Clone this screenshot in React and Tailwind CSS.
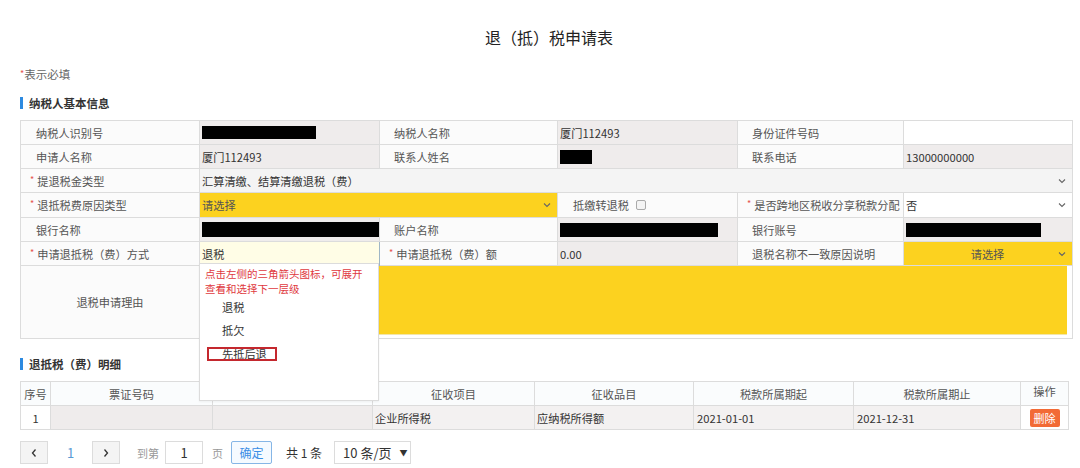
import React from "react";

const FONT = { fontFamily: '"Noto Sans CJK SC", "Microsoft YaHei", "Liberation Sans", sans-serif' };

function Chevron({ className = "" }) {
  return (
    <svg width="10" height="10" viewBox="0 0 10 10" className={className}>
      <path d="M2 3.5 L5 6.5 L8 3.5" fill="none" stroke="#666" strokeWidth="1.1" />
    </svg>
  );
}

function Req() {
  return <span className="text-[#e5534b] text-[9px] mr-[3px] relative -top-[1px]">*</span>;
}

function Label({ children, req, first }) {
  const pad = req ? "pl-[9px]" : first ? "pl-[15px]" : "pl-[14px]";
  return (
    <td className="border border-[#dcdcdc] bg-[#fbfbfb] text-[#555] h-[24px] p-0 leading-[14px] whitespace-nowrap overflow-hidden">
      <div className={`flex items-center ${pad}`}>
        {req && <Req />}
        {children}
      </div>
    </td>
  );
}

function Val({ children, colSpan, bg = "bg-[#efecec]" }) {
  return (
    <td colSpan={colSpan} className={`border border-[#dcdcdc] ${bg} text-[#333] h-[24px] p-0 leading-[14px] whitespace-nowrap overflow-hidden`}>
      <div className="pl-[2px]">{children}</div>
    </td>
  );
}

function Black({ w, h = "h-[13px]" }) {
  return <div className={`bg-black ${h}`} style={{ width: w }} />;
}

export default function App() {
  return (
    <div className="w-[1080px] h-[468px] bg-white overflow-hidden relative text-[11.2px]" style={FONT}>
      <div className="pl-[20px] pr-[8px] pt-[27px]">
        <div className="text-center text-[16px] leading-[20px] text-[#222] pl-[6px]">退（抵）税申请表</div>
        <div className="mt-[19px] leading-[16px] text-[#666] text-[11.5px]">
          <span className="text-[#e5534b] text-[9px] relative -top-[2px]">*</span>表示必填
        </div>
        <div className="mt-[11px] flex items-center leading-[16px] text-[11.5px]">
          <div className="w-[3px] h-[12px] bg-[#2d8ae0] mr-[6px]" />
          <span className="font-bold text-[#333]">纳税人基本信息</span>
        </div>

        <table className="mt-[9px] table-fixed border-collapse w-[1052px]">
          <colgroup>
            <col className="w-[179px]" />
            <col className="w-[180px]" />
            <col className="w-[178px]" />
            <col className="w-[180px]" />
            <col className="w-[166px]" />
            <col className="w-[169px]" />
          </colgroup>
          <tbody>
            <tr className="h-[24px]">
              <Label first>纳税人识别号</Label>
              <Val><Black w={114} /></Val>
              <Label>纳税人名称</Label>
              <Val>厦门112493</Val>
              <Label>身份证件号码</Label>
              <Val bg="bg-white"></Val>
            </tr>
            <tr className="h-[24px]">
              <Label first>申请人名称</Label>
              <Val>厦门112493</Val>
              <Label>联系人姓名</Label>
              <Val><Black w={32} h="h-[14px]" /></Val>
              <Label>联系电话</Label>
              <Val>13000000000</Val>
            </tr>
            <tr className="h-[24px]">
              <Label req>提退税金类型</Label>
              <Val colSpan={5} bg="bg-[#f4f4f4]">
                <div className="flex items-center justify-between pr-[5px]">
                  <span>汇算清缴、结算清缴退税（费）</span>
                  <Chevron />
                </div>
              </Val>
            </tr>
            <tr className="h-[25px]">
              <Label req>退抵税费原因类型</Label>
              <Val colSpan={2} bg="bg-[#fcd21f]">
                <div className="flex items-center justify-between pr-[5px] text-[#555]">
                  <span>请选择</span>
                  <Chevron />
                </div>
              </Val>
              <Label first>
                <span>抵缴转退税</span>
                <span className="ml-[7px] w-[10px] h-[10px] border border-[#aaa] rounded-[2px] bg-[#f4f4f4]" />
              </Label>
              <Label req>是否跨地区税收分享税款分配</Label>
              <Val bg="bg-white">
                <div className="flex items-center justify-between pr-[5px]">
                  <span>否</span>
                  <Chevron />
                </div>
              </Val>
            </tr>
            <tr className="h-[24px]">
              <Label first>银行名称</Label>
              <Val><Black w={177} h="h-[15px]" /></Val>
              <Label>账户名称</Label>
              <Val><Black w={158} h="h-[14px]" /></Val>
              <Label>银行账号</Label>
              <Val><Black w={135} h="h-[14px]" /></Val>
            </tr>
            <tr className="h-[24px]">
              <Label req>申请退抵税（费）方式</Label>
              <td className="border border-[#9fb6c6] bg-[#fffde6] text-[#333] h-[24px] p-0 leading-[14px]">
                <div className="pl-[2px]">退税</div>
              </td>
              <Label req>申请退抵税（费）额</Label>
              <Val>0.00</Val>
              <Label>退税名称不一致原因说明</Label>
              <Val bg="bg-[#fcd21f]">
                <div className="flex items-center pr-[5px] text-[#555]">
                  <span className="flex-1 text-center pl-[12px]">请选择</span>
                  <Chevron />
                </div>
              </Val>
            </tr>
            <tr className="h-[73px]">
              <td className="border border-[#dcdcdc] bg-[#fbfbfb] text-[#555] h-[73px] p-0 text-center leading-[14px]">退税申请理由</td>
              <td colSpan={5} className="border border-[#dcdcdc] bg-white h-[73px] align-top p-0">
                <div className="h-[69px] mr-[5px] bg-[#fcd21f] border-b border-[#f3e6a8]" />
              </td>
            </tr>
          </tbody>
        </table>

        <div className="mt-[17px] flex items-center leading-[16px] text-[11.5px]">
          <div className="w-[3px] h-[12px] bg-[#2d8ae0] mr-[6px]" />
          <span className="font-bold text-[#333]">退抵税（费）明细</span>
        </div>

        <table className="mt-[9px] table-fixed border-collapse w-[1048px]">
          <colgroup>
            <col className="w-[30px]" />
            <col className="w-[162px]" />
            <col className="w-[160px]" />
            <col className="w-[162px]" />
            <col className="w-[159px]" />
            <col className="w-[160px]" />
            <col className="w-[167px]" />
            <col className="w-[48px]" />
          </colgroup>
          <thead>
            <tr className="text-[#555] bg-[#fafcfd] h-[24px]">
              <th className="border border-[#dcdcdc] h-[24px] p-0 leading-[14px] font-normal">序号</th>
              <th className="border border-[#dcdcdc] p-0 leading-[14px] font-normal">票证号码</th>
              <th className="border border-[#dcdcdc] p-0 leading-[14px] font-normal"></th>
              <th className="border border-[#dcdcdc] p-0 leading-[14px] font-normal">征收项目</th>
              <th className="border border-[#dcdcdc] p-0 leading-[14px] font-normal">征收品目</th>
              <th className="border border-[#dcdcdc] p-0 leading-[14px] font-normal">税款所属期起</th>
              <th className="border border-[#dcdcdc] p-0 leading-[14px] font-normal">税款所属期止</th>
              <th className="border border-[#dcdcdc] p-0 pt-[2px] font-normal align-top leading-[14px]">操作</th>
            </tr>
          </thead>
          <tbody>
            <tr className="text-[#333] h-[24px]">
              <td className="border border-[#dcdcdc] h-[24px] p-0 leading-[14px] text-center bg-white">1</td>
              <td className="border border-[#dcdcdc] p-0 bg-[#efecec]"></td>
              <td className="border border-[#dcdcdc] p-0 bg-[#efecec]"></td>
              <td className="border border-[#dcdcdc] p-0 leading-[14px] bg-[#f3f1f1]"><div className="pl-[2px]">企业所得税</div></td>
              <td className="border border-[#dcdcdc] p-0 leading-[14px] bg-[#f3f1f1]"><div className="pl-[2px]">应纳税所得额</div></td>
              <td className="border border-[#dcdcdc] p-0 leading-[14px] bg-[#f3f1f1]"><div className="pl-[3px]">2021-01-01</div></td>
              <td className="border border-[#dcdcdc] p-0 leading-[14px] bg-[#f3f1f1]"><div className="pl-[3px]">2021-12-31</div></td>
              <td className="border border-[#dcdcdc] p-0 bg-white">
                <div className="flex justify-center">
                  <span className="bg-[#f26a35] text-white text-[11px] leading-[18px] px-[4px] rounded-[2px]">删除</span>
                </div>
              </td>
            </tr>
          </tbody>
        </table>

        <div className="mt-[11px] flex items-center h-[23px] text-[12px] leading-[16px]">
          <div className="w-[28px] h-[23px] border border-[#dcdcdc] bg-[#f4f4f4] flex items-center justify-center text-[#333]">
            <svg width="8" height="10" viewBox="0 0 8 10"><path d="M5.5 1.5 L2.5 5 L5.5 8.5" fill="none" stroke="#333" strokeWidth="1.3" /></svg>
          </div>
          <span className="ml-[19px] w-[8px] text-[#5a9bd5] text-[13px]">1</span>
          <div className="ml-[17px] w-[28px] h-[23px] border border-[#dcdcdc] bg-[#f4f4f4] flex items-center justify-center">
            <svg width="8" height="10" viewBox="0 0 8 10"><path d="M2.5 1.5 L5.5 5 L2.5 8.5" fill="none" stroke="#333" strokeWidth="1.3" /></svg>
          </div>
          <span className="ml-[17px] text-[#999] text-[11px]">到第</span>
          <div className="ml-[6px] w-[38px] h-[23px] border border-[#dcdcdc] bg-white flex items-center justify-center text-[#333] text-[13px]">1</div>
          <span className="ml-[9px] text-[#999] text-[11px]">页</span>
          <div className="ml-[8px] w-[41px] h-[23px] border border-[#86b6e6] bg-[#f5faff] rounded-[2px] flex items-center justify-center text-[#3a8ee6]">确定</div>
          <span className="ml-[14px] text-[#333]">共 1 条</span>
          <div className="ml-[12px] w-[77px] h-[23px] border border-[#dcdcdc] bg-white flex items-center pl-[8px] text-[#333] text-[13px]">
            <span>10 条/页</span>
            <span className="ml-[8px] text-[8px]">▼</span>
          </div>
        </div>
      </div>

      {/* dropdown overlay */}
      <div className="absolute left-[199px] top-[263px] w-[180px] h-[138px] bg-white border border-[#dcdcdc] shadow-[0_1px_2px_rgba(0,0,0,0.05)] text-[11.2px]">
        <div className="pl-[5px] pt-[2px] text-[#e0393e] text-[10.5px] leading-[15px] whitespace-nowrap">
          点击左侧的三角箭头图标，可展开<br />查看和选择下一层级
        </div>
        <div className="pl-[22px] mt-[3px] text-[#333] leading-[16px]">退税</div>
        <div className="pl-[22px] mt-[7px] text-[#333] leading-[16px]">抵欠</div>
        <div className="ml-[7px] mt-[9px] w-[70px] h-[14px] border-2 border-[#c4282e] text-[#333] leading-[10px] pl-[13px] overflow-hidden">先抵后退</div>
      </div>
    </div>
  );
}
